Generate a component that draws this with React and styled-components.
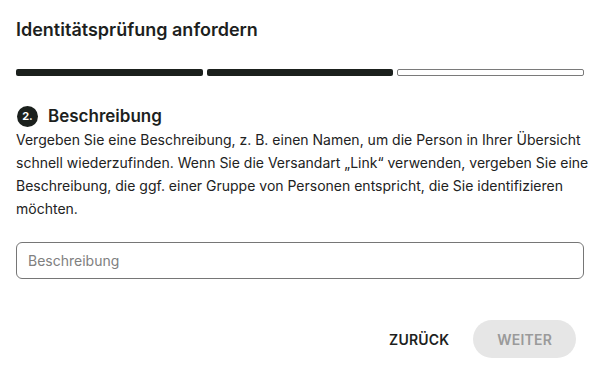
import React from "react";
import styled, { createGlobalStyle } from "styled-components";

const Global = createGlobalStyle`
  html, body { margin: 0; padding: 0; background: #fff; }
  body { font-family: Inter, "Noto Sans", sans-serif; color: #1d1f1e; -webkit-font-smoothing: antialiased; }
`;

const Dialog = styled.div`
  width: 600px;
  height: 374px;
  box-sizing: border-box;
  padding: 18px 16px 0 16px;
  display: flex;
  flex-direction: column;
`;

const Title = styled.h2`
  margin: 0;
  font-size: 18px;
  line-height: 24px;
  font-weight: 600;
  color: #1d1f1e;
`;

const Progress = styled.div`
  margin-top: 27px;
  display: grid;
  grid-template-columns: repeat(3, 1fr);
  gap: 4px;
`;

const Segment = styled.div`
  height: 7px;
  border-radius: 2px;
  box-sizing: border-box;
  background: ${(p) => (p.$done ? "#1b201d" : "#fff")};
  border: ${(p) => (p.$done ? "none" : "1.5px solid #7a7a7a")};
`;

const StepHeader = styled.div`
  margin-top: 29px;
  display: flex;
  align-items: center;
  gap: 10px;
  padding-left: 1px;
`;

const StepNum = styled.span`
  width: 21px;
  height: 21px;
  border-radius: 50%;
  background: #1b201d;
  color: #fff;
  font-size: 11px;
  font-weight: 700;
  display: flex;
  align-items: center;
  justify-content: center;
`;

const StepTitle = styled.h3`
  margin: 0;
  font-size: 17px;
  line-height: 22px;
  font-weight: 600;
  color: #1d1f1e;
`;

const Text = styled.p`
  margin: 1px -6px 0 0;
  font-size: 14px;
  line-height: 23px;
  color: #222;
`;

const Input = styled.input`
  margin-top: 22px;
  height: 37px;
  box-sizing: border-box;
  border: 1px solid #767676;
  border-radius: 6px;
  padding: 0 11px;
  font-family: Inter, "Noto Sans", sans-serif;
  font-size: 14px;
  color: #222;
  outline: none;
  &::placeholder { color: #808080; }
`;

const Actions = styled.div`
  margin-top: 41px;
  display: flex;
  justify-content: flex-end;
  align-items: center;
  gap: 24px;
  padding-right: 8px;
`;

const Button = styled.button`
  font-family: Inter, "Noto Sans", sans-serif;
  font-size: 14px;
  font-weight: 600;
  letter-spacing: 0.2px;
  height: 38px;
  border: none;
  border-radius: 19px;
  padding: ${(p) => (p.$filled ? "0 24px" : "0")};
  background: ${(p) => (p.$filled ? "#e6e6e6" : "transparent")};
  color: ${(p) => (p.$disabled ? "#9a9a9a" : "#1d1f1e")};
  cursor: pointer;
`;

export default function App() {
  return (
    <>
      <Global />
      <Dialog>
        <Title>Identitätsprüfung anfordern</Title>
        <Progress>
          <Segment $done />
          <Segment $done />
          <Segment />
        </Progress>
        <StepHeader>
          <StepNum>2.</StepNum>
          <StepTitle>Beschreibung</StepTitle>
        </StepHeader>
        <Text>
          Vergeben Sie eine Beschreibung, z. B. einen Namen, um die Person in Ihrer Übersicht schnell
          wiederzufinden. Wenn Sie die Versandart „Link“ verwenden, vergeben Sie eine Beschreibung,
          die ggf. einer Gruppe von Personen entspricht, die Sie identifizieren möchten.
        </Text>
        <Input placeholder="Beschreibung" />
        <Actions>
          <Button>ZURÜCK</Button>
          <Button $filled $disabled disabled>WEITER</Button>
        </Actions>
      </Dialog>
    </>
  );
}
